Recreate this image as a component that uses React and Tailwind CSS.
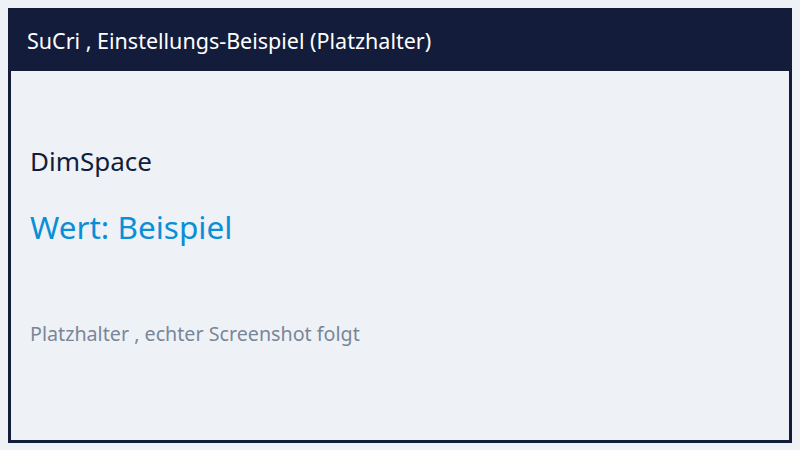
export default function App() {
  return (
    <div className="w-[800px] h-[450px] bg-[#eef2f7] p-2 font-['Noto_Sans',sans-serif]">
      <div className="h-[435px] border-[3px] border-[#131d3b] flex flex-col">
        <div className="bg-[#131d3b] h-[60px] px-4 flex items-center text-white text-[21.5px]">
          SuCri , Einstellungs-Beispiel (Platzhalter)
        </div>
        <div className="flex-1 px-[19px] pt-[72px]">
          <div className="text-[#131d3b] text-[26px] leading-9">DimSpace</div>
          <div className="text-[#0a8fd6] text-[31.5px] leading-10 mt-[28px]">Wert: Beispiel</div>
          <div className="text-[#7a8698] text-[19.7px] leading-7 mt-[73px]">Platzhalter , echter Screenshot folgt</div>
        </div>
      </div>
    </div>
  );
}
